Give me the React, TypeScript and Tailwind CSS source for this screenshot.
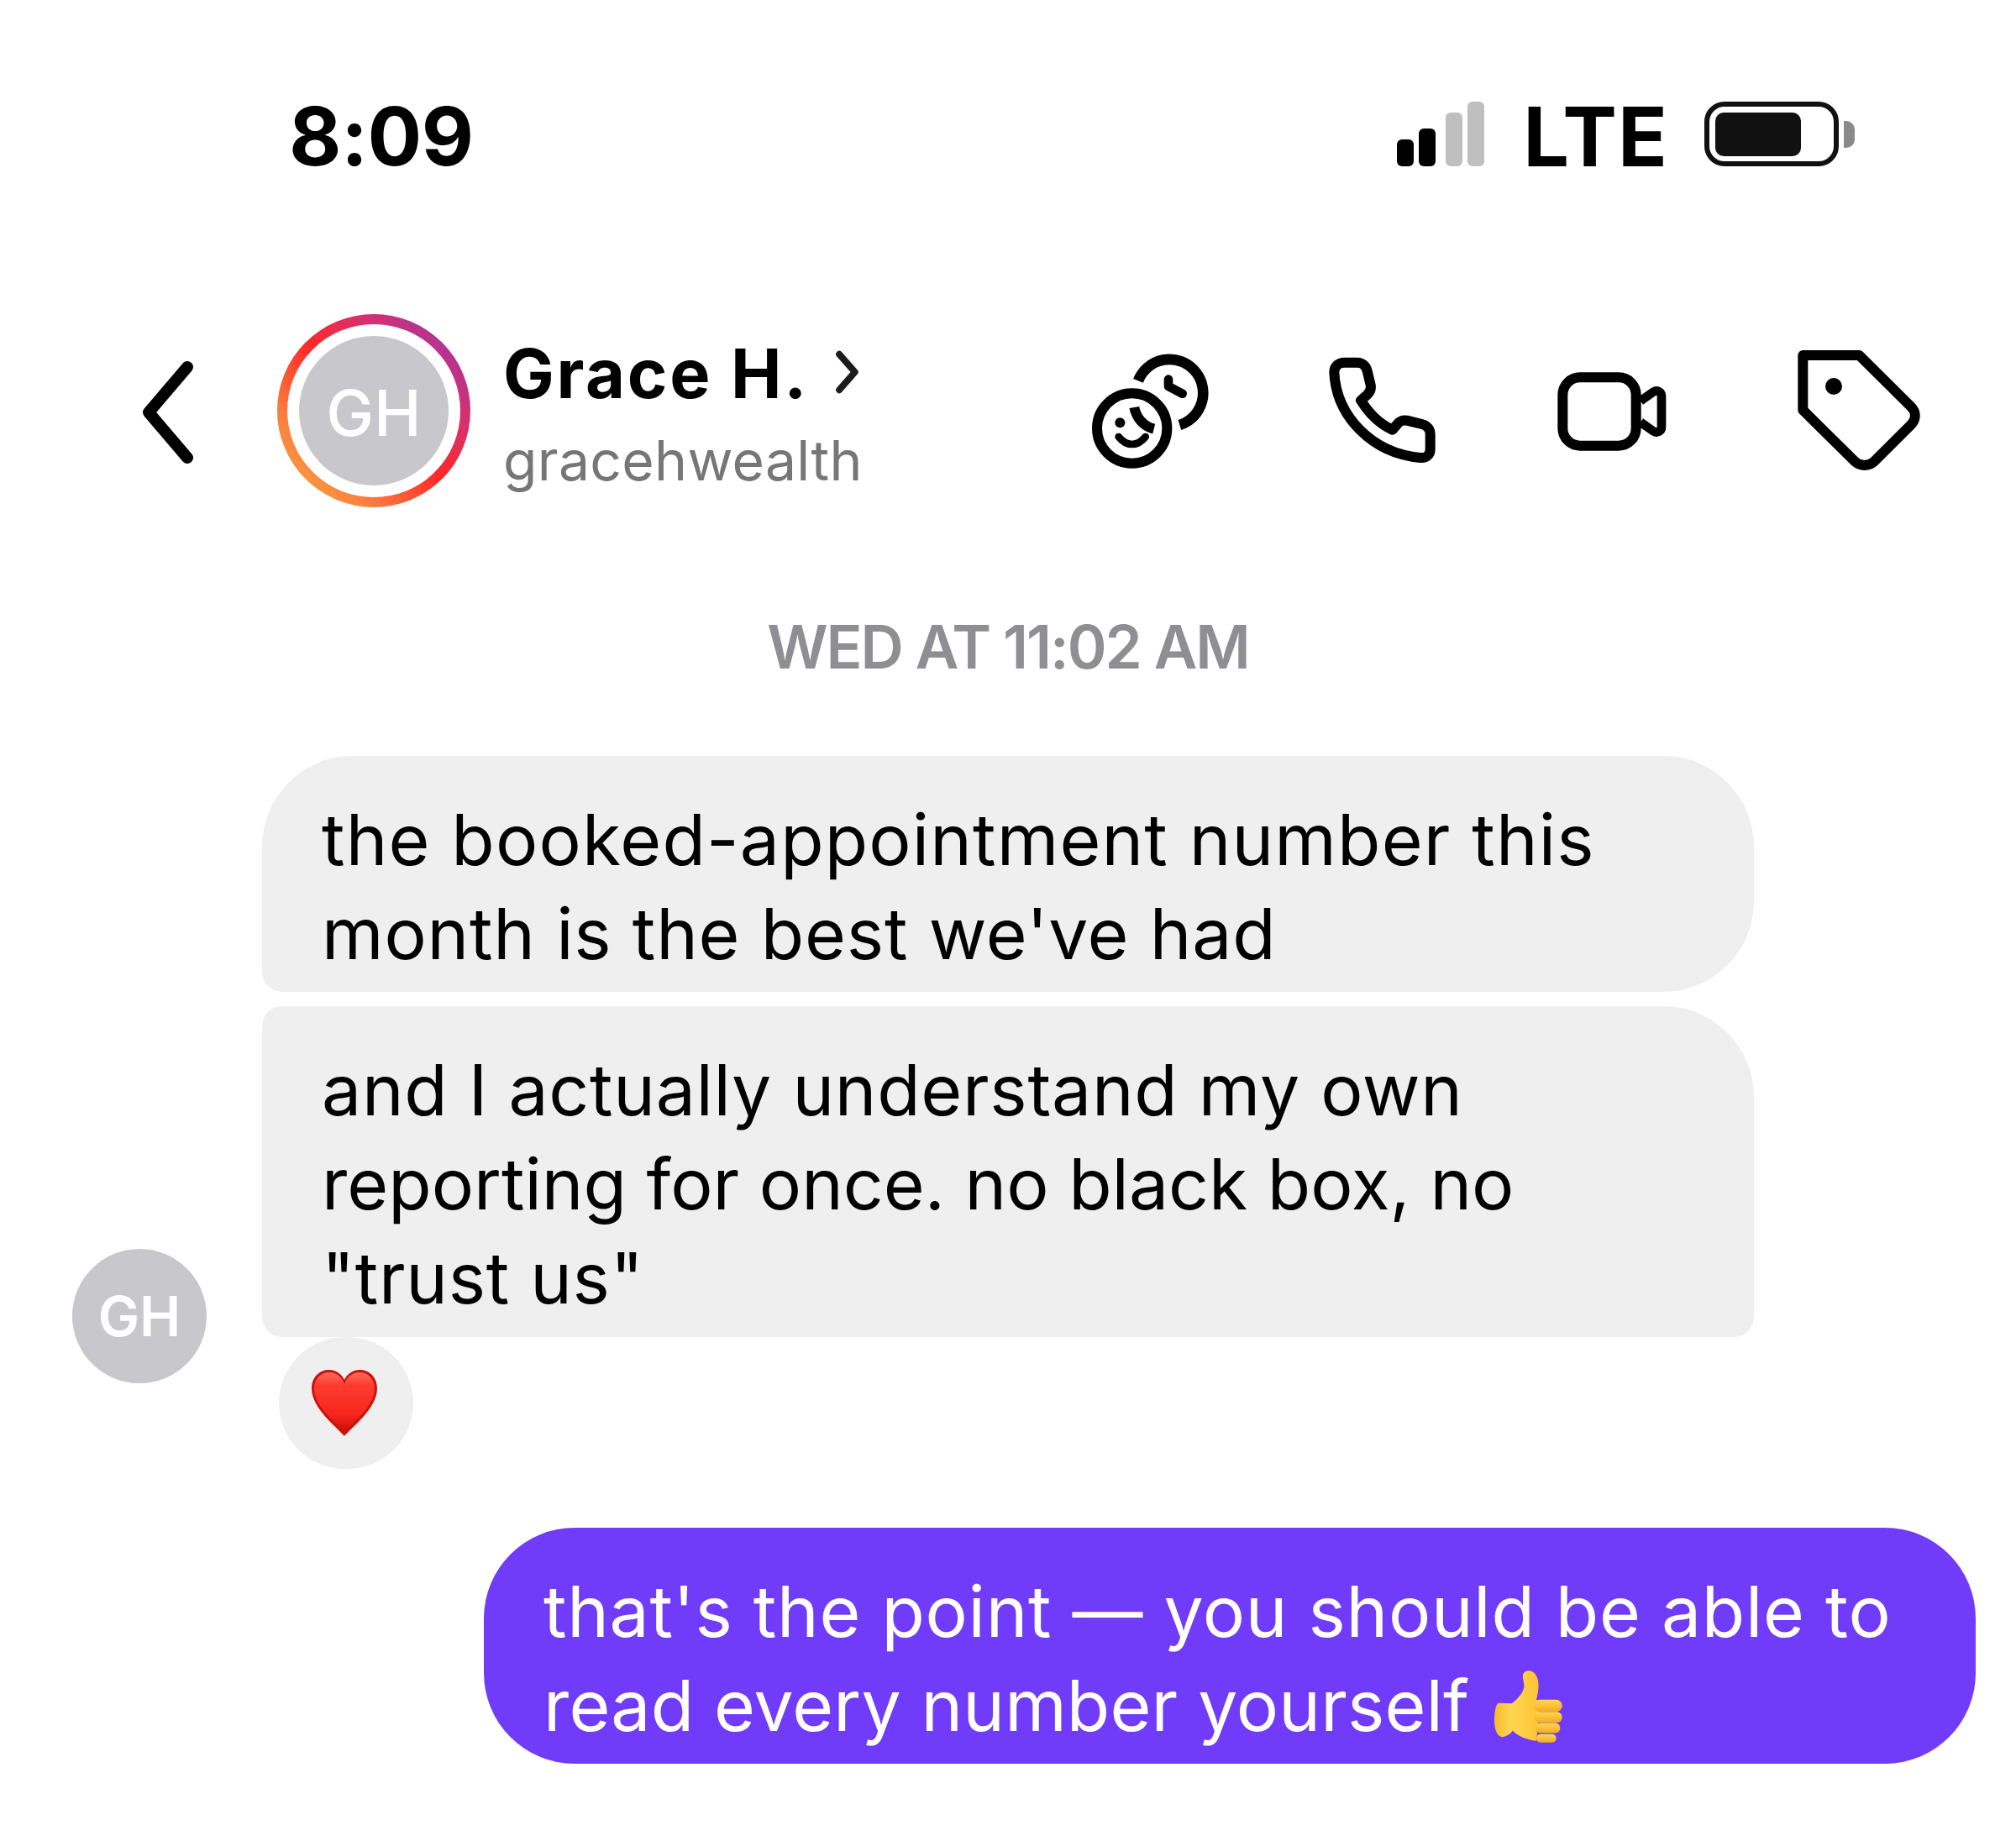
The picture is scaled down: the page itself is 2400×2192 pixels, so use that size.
const inter = "font-['Inter',sans-serif]";

function Signal() {
  const bars = [
    { h: "h-[32px]", c: "bg-black", gap: "" },
    { h: "h-[45px]", c: "bg-black", gap: "ml-[6px]" },
    { h: "h-[64px]", c: "bg-[#bfbfbf]", gap: "ml-[12px]" },
    { h: "h-[77px]", c: "bg-[#bfbfbf]", gap: "ml-[6px]" },
  ];
  return (
    <div className="flex items-end h-[77px]">
      {bars.map((b, i) => (
        <div key={i} className={`w-[20px] rounded-[6px] ${b.h} ${b.c} ${b.gap}`} />
      ))}
    </div>
  );
}

function Battery() {
  return (
    <div className="flex items-center">
      <div className="w-[160px] h-[77px] rounded-[24px] border-[6px] border-[#111] pl-[7px] flex items-center">
        <div className="w-[102px] h-[52px] rounded-[10px] bg-[#111]" />
      </div>
      <div className="ml-[6px] w-[13px] h-[32px] rounded-r-[10px] bg-[#8a8a8a]" />
    </div>
  );
}

function Back() {
  return (
    <svg width="70" height="130" viewBox="0 0 70 130" fill="none" className="shrink-0">
      <path d="M58 11 L12 65 L58 119" stroke="#000" strokeWidth="14" strokeLinecap="round" strokeLinejoin="round" />
    </svg>
  );
}

function CoinsIcon() {
  return (
    <svg width="160" height="160" viewBox="0 0 480 480" fill="none" className="mt-[36px] shrink-0">
      <circle cx="170" cy="300" r="125" stroke="#000" strokeWidth="36" />
      <path d="M192 130 A 120 120 0 1 1 340 288" stroke="#000" strokeWidth="38" />
      <path d="M300 125 V150 L350 176" stroke="#000" strokeWidth="32" strokeLinecap="round" strokeLinejoin="round" />
      <circle cx="127" cy="280" r="18" fill="#000" />
      <path d="M178 225 C185 262 210 292 248 302" stroke="#000" strokeWidth="36" />
      <path d="M122 330 C150 366 190 366 218 330" stroke="#000" strokeWidth="26" strokeLinecap="round" />
    </svg>
  );
}

function PhoneIcon() {
  return (
    <svg width="150" height="150" viewBox="0 0 450 450" fill="none" className="ml-[120px] mt-[36px] shrink-0">
      <path
        d="M52 100 C52 78 68 65 88 65 H135 C150 65 165 75 170 95 L182 145 C185 160 180 170 170 180 L147 200 C175 245 215 285 260 305 L282 280 C290 272 300 270 312 272 L365 285 C385 290 395 305 395 320 V375 C395 395 380 407 360 405 C190 390 60 260 52 100 Z"
        stroke="#000"
        strokeWidth="36"
        strokeLinejoin="round"
      />
    </svg>
  );
}

function VideoIcon() {
  return (
    <svg width="160" height="130" viewBox="0 0 480 390" fill="none" className="ml-[120px] mt-[46px] shrink-0">
      <rect x="58" y="88" width="262" height="244" rx="62" stroke="#000" strokeWidth="36" />
      <path
        d="M336 172 L380 141 C394 131 411 139 411 155 V265 C411 281 394 289 380 279 L336 248"
        stroke="#000"
        strokeWidth="32"
        strokeLinejoin="round"
      />
    </svg>
  );
}

function TagIcon() {
  return (
    <svg width="170" height="170" viewBox="0 0 510 510" fill="none" className="ml-[130px] mt-[31px] shrink-0">
      <path
        d="M46 54 H247 L432 238 C451 257 451 283 432 302 L301 433 C282 452 250 452 231 433 L46 250 Z"
        stroke="#000"
        strokeWidth="36"
        strokeLinejoin="round"
      />
      <circle cx="156" cy="165" r="30" fill="#000" />
    </svg>
  );
}

function Heart() {
  return (
    <svg width="78" height="79" viewBox="0 0 78 79">
      <defs>
        <linearGradient id="heartFill" x1="0" y1="0" x2="0" y2="1">
          <stop offset="0" stopColor="#ff6a5e" />
          <stop offset="0.22" stopColor="#ff3b30" />
          <stop offset="0.7" stopColor="#f8261c" />
          <stop offset="1" stopColor="#c90c06" />
        </linearGradient>
      </defs>
      <path
        d="M39 79 C30 68 0 46 0 22 C0 8 10 0 21 0 C29 0 36 5 39 12 C42 5 49 0 57 0 C68 0 78 8 78 22 C78 46 48 68 39 79 Z"
        fill="#c8140c"
      />
      <path
        d="M39 74 C30 64 3 44 3 22 C3 10 12 3 21 3 C29 3 36 8 39 17 C42 8 49 3 57 3 C66 3 75 10 75 22 C75 44 48 64 39 74 Z"
        fill="url(#heartFill)"
      />
    </svg>
  );
}

function Thumb() {
  return (
    <svg width="81" height="87" viewBox="235 128 243 260" className="inline-block align-[-14px] ml-[30px]">
      <defs>
        <linearGradient id="thumbFill" x1="0" y1="0" x2="1" y2="0">
          <stop offset="0" stopColor="#f7b92e" />
          <stop offset="0.35" stopColor="#ffd651" />
          <stop offset="1" stopColor="#fcc332" />
        </linearGradient>
        <linearGradient id="fingerFill" x1="0" y1="0" x2="0" y2="1">
          <stop offset="0" stopColor="#ffd64f" />
          <stop offset="1" stopColor="#f3ab1f" />
        </linearGradient>
      </defs>
      <path
        d="M250 247 C240 250 235 280 235 310 C235 340 245 368 265 368 C280 365 295 355 300 345 C320 365 350 378 385 382 L400 240 L385 235 C395 200 395 165 385 150 C375 128 345 125 337 145 C335 165 345 180 340 195 C335 215 310 240 297 248 Z"
        fill="url(#thumbFill)"
      />
      <rect x="385" y="358" width="71" height="30" rx="15" fill="url(#fingerFill)" />
      <rect x="382" y="318" width="88" height="36" rx="18" fill="url(#fingerFill)" />
      <rect x="378" y="278" width="99" height="39" rx="19" fill="url(#fingerFill)" />
      <rect x="375" y="235" width="102" height="43" rx="21" fill="url(#fingerFill)" />
    </svg>
  );
}

export default function App() {
  return (
    <div className={`w-[2400px] h-[2192px] bg-white flex flex-col ${inter}`}>
      {/* status bar */}
      <div className="flex items-center h-[77px] mt-[121px] pl-[344px]">
        <span className="pt-[5px] text-[96px] leading-none font-bold text-black tracking-[-0.5px]">8:09</span>
        <div className="ml-auto flex items-center pr-[192px]">
          <Signal />
          <span className="pt-[5px] ml-[46px] mr-[43px] text-[97px] leading-none font-bold text-black tracking-[1px]">LTE</span>
          <Battery />
        </div>
      </div>

      {/* header */}
      <div className="flex items-start h-[233px] mt-[176px] pl-[165px]">
        <div className="mt-[52px]">
          <Back />
        </div>
        <div className="ml-[95px] w-[230px] h-[230px] shrink-0 rounded-full p-[12px] bg-[linear-gradient(45deg,#fdb045_0%,#fa7e3e_25%,#ff2828_50%,#d6306f_72%,#8a3ab9_100%)]">
          <div className="w-full h-full rounded-full bg-white p-[14px]">
            <div className="w-full h-full rounded-full bg-[#c7c7cc] pt-[4px] flex items-center justify-center text-white text-[76px] font-medium">
              GH
            </div>
          </div>
        </div>
        <div className="ml-[39px] w-[424px] shrink-0 flex flex-col">
          <div className="flex items-center mt-[31px] h-[81px]">
            <span className="text-[81px] leading-none font-bold text-black tracking-[2.7px] whitespace-nowrap">Grace H.</span>
            <svg width="34" height="60" viewBox="0 0 34 60" fill="none" className="ml-[30px] -mt-[6px]">
              <path d="M7 6 L28 30 L7 54" stroke="#1c1c1c" strokeWidth="9" strokeLinecap="round" strokeLinejoin="round" />
            </svg>
          </div>
          <span className="mt-[29px] text-[66px] leading-none text-[#767676] tracking-[0.3px]">gracehwealth</span>
        </div>
        <div className="ml-[268px] flex items-start">
          <CoinsIcon />
          <PhoneIcon />
          <VideoIcon />
          <TagIcon />
        </div>
      </div>

      {/* timestamp */}
      <div className="mt-[123px] text-center text-[71px] leading-[80px] font-semibold text-[#8e8e93] tracking-[-2px]">
        WED AT 11:02 AM
      </div>

      {/* incoming */}
      <div className="flex items-end mt-[90px] pl-[86px]">
        <div className="w-[160px] h-[160px] mb-[102px] rounded-full bg-[#c7c7cc] flex items-center justify-center text-white text-[66px] font-semibold">
          GH
        </div>
        <div className="ml-[66px] flex flex-col items-start">
          <div className="w-[1776px] h-[281px] pl-[71px] pt-[44px] bg-[#efefef] rounded-[108px] rounded-bl-[24px] text-[84px] leading-[112px] text-black">
            <span className="block tracking-[1.15px]">the booked-appointment number this</span>
            <span className="block tracking-[0.8px]">month is the best we've had</span>
          </div>
          <div className="mt-[17px] w-[1776px] h-[394px] pl-[71px] pt-[44px] bg-[#efefef] rounded-[24px] rounded-tr-[108px] text-[84px] leading-[112px] text-black">
            <span className="block tracking-[0.73px]">and I actually understand my own</span>
            <span className="block tracking-[0px]">reporting for once. no black box, no</span>
            <span className="block tracking-[0.7px]">"trust us"</span>
          </div>
          <div className="ml-[20px] pr-[4px] w-[160px] h-[157px] rounded-full bg-[#efefef] flex items-center justify-center">
            <Heart />
          </div>
        </div>
      </div>

      {/* outgoing */}
      <div className="flex justify-end mt-[70px] pr-[48px]">
        <div className="w-[1776px] h-[281px] pl-[71px] pt-[44px] bg-[#713bfa] rounded-[108px] text-[84px] leading-[112px] text-white">
          <span className="block tracking-[0.7px]">that's the point — you should be able to</span>
          <span className="block tracking-[0.15px]">
            read every number yourself
            <Thumb />
          </span>
        </div>
      </div>
    </div>
  );
}
